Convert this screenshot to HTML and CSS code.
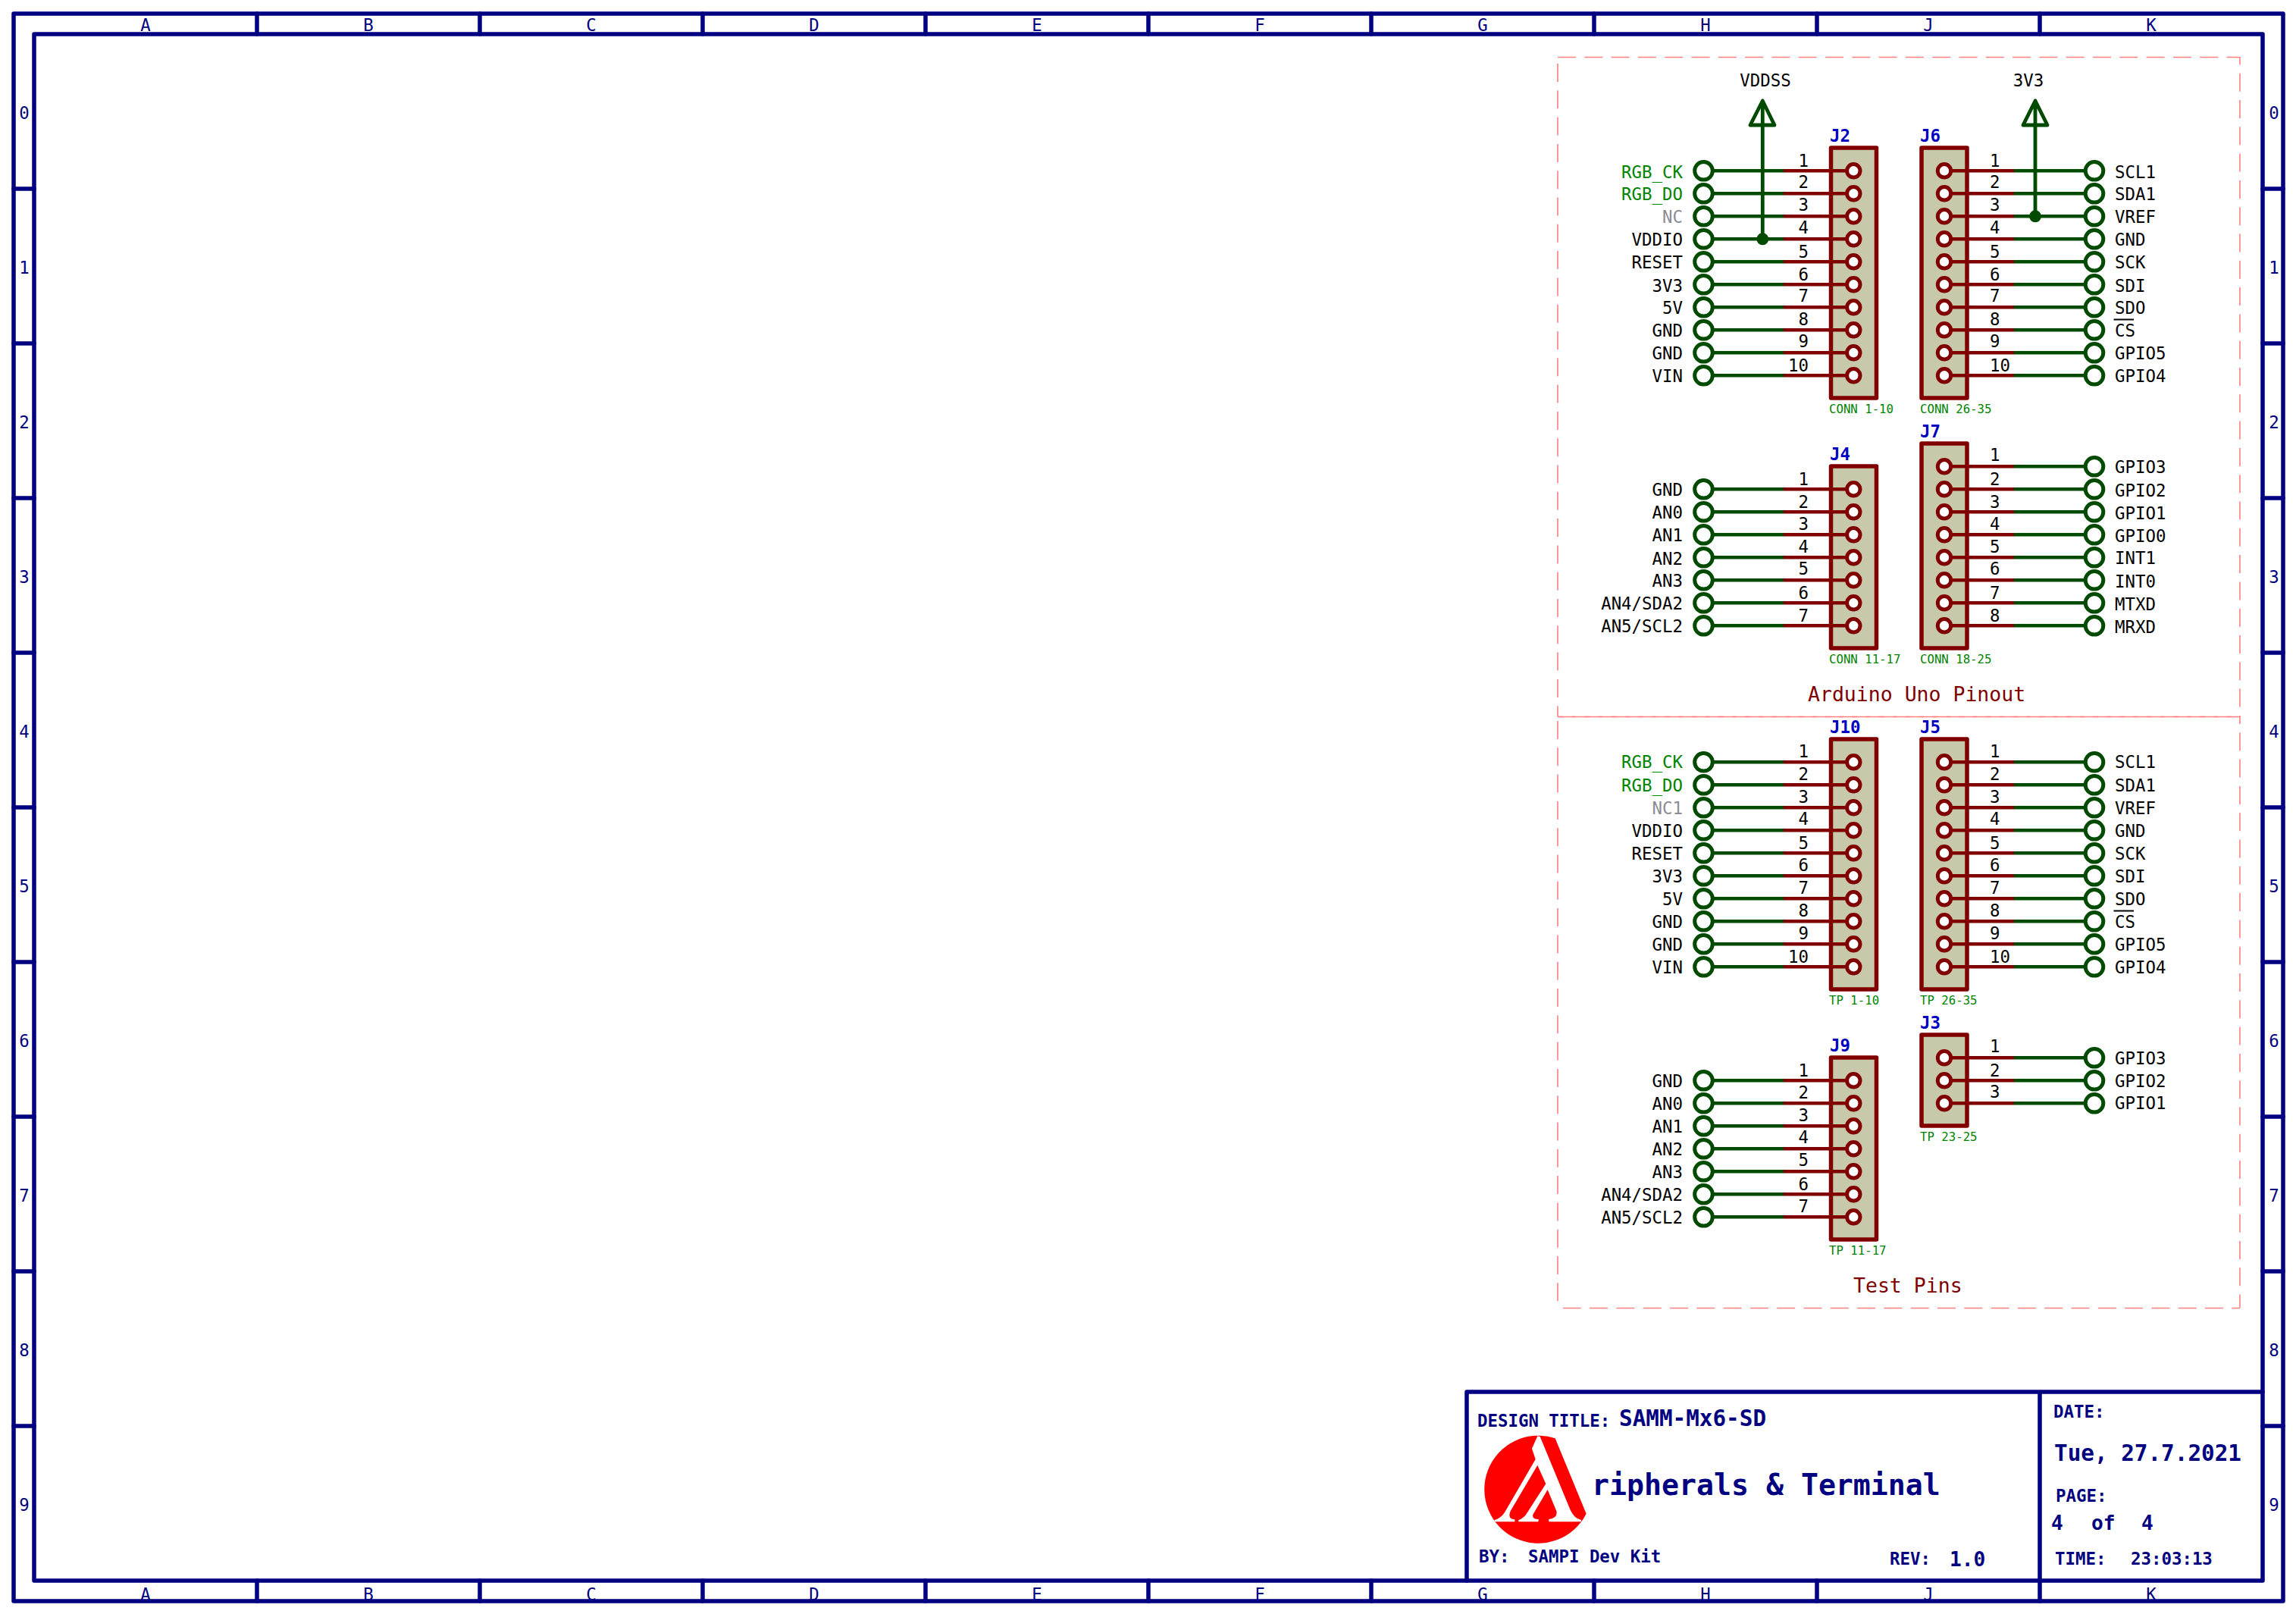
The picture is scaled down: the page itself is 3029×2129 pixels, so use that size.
FILE: index.html
```
<!DOCTYPE html>
<html lang="en">
<head>
<meta charset="utf-8">
<title>SAMM-Mx6-SD Peripherals &amp; Terminal</title>
<link rel="stylesheet" href="styles.css">
</head>
<body>
<svg class="sheet" width="3029" height="2129" viewBox="0 0 3029 2129" xmlns="http://www.w3.org/2000/svg">
<defs>
  <g id="pl">
    <line class="red" x1="2353" y1="0" x2="2445" y2="0"/>
    <line class="wire" x1="2259" y1="0" x2="2353" y2="0"/>
    <circle class="term" cx="2247.5" cy="0" r="11.8"/>
    <circle class="pad" cx="2445.3" cy="0" r="8.7"/>
  </g>
  <g id="pr">
    <line class="red" x1="2565" y1="0" x2="2657" y2="0"/>
    <line class="wire" x1="2657" y1="0" x2="2751" y2="0"/>
    <circle class="term" cx="2763" cy="0" r="11.8"/>
    <circle class="pad" cx="2565" cy="0" r="8.7"/>
  </g>
</defs>

<!-- frame -->
<g class="frame">
  <rect x="18" y="18" width="2994" height="2094"/>
  <rect x="45" y="45" width="2940" height="2040"/>
  <path d="M339 18V45M633 18V45M927 18V45M1221 18V45M1515 18V45M1809 18V45M2103 18V45M2397 18V45M2691 18V45"/>
  <path d="M339 2085V2112M633 2085V2112M927 2085V2112M1221 2085V2112M1515 2085V2112M1809 2085V2112M2103 2085V2112M2397 2085V2112"/>
  <path d="M18 249H45M18 453H45M18 657H45M18 861H45M18 1065H45M18 1269H45M18 1473H45M18 1677H45M18 1881H45"/>
  <path d="M2985 249H3012M2985 453H3012M2985 657H3012M2985 861H3012M2985 1065H3012M2985 1269H3012M2985 1473H3012M2985 1677H3012M2985 1881H3012"/>
  <path d="M1935 2085V1836H2985M2691 1836V2112"/>
</g>
<g class="zone mid">
  <text x="192" y="41">A</text><text x="486" y="41">B</text><text x="780" y="41">C</text><text x="1074" y="41">D</text><text x="1368" y="41">E</text><text x="1662" y="41">F</text><text x="1956" y="41">G</text><text x="2250" y="41">H</text><text x="2544" y="41">J</text><text x="2838" y="41">K</text>
  <text x="192" y="2111">A</text><text x="486" y="2111">B</text><text x="780" y="2111">C</text><text x="1074" y="2111">D</text><text x="1368" y="2111">E</text><text x="1662" y="2111">F</text><text x="1956" y="2111">G</text><text x="2250" y="2111">H</text><text x="2544" y="2111">J</text><text x="2838" y="2111">K</text>
  <text x="32" y="157">0</text><text x="32" y="361">1</text><text x="32" y="565">2</text><text x="32" y="769">3</text><text x="32" y="973">4</text><text x="32" y="1177">5</text><text x="32" y="1381">6</text><text x="32" y="1585">7</text><text x="32" y="1789">8</text><text x="32" y="1993">9</text>
  <text x="3000" y="157">0</text><text x="3000" y="361">1</text><text x="3000" y="565">2</text><text x="3000" y="769">3</text><text x="3000" y="973">4</text><text x="3000" y="1177">5</text><text x="3000" y="1381">6</text><text x="3000" y="1585">7</text><text x="3000" y="1789">8</text><text x="3000" y="1993">9</text>
</g>

<!-- dashed groups -->
<g class="dash">
  <line class="d0" x1="2055" y1="75.5" x2="2955" y2="75.5"/>
  <line class="d1" x1="2055" y1="75" x2="2055" y2="945"/>
  <line class="d2" x1="2955" y1="75" x2="2955" y2="945"/>
  <line class="d0" x1="2055" y1="945.5" x2="2955" y2="945.5"/>
  <line class="d3" x1="2055" y1="945.5" x2="2955" y2="945.5"/>
  <line class="d4" x1="2055" y1="945" x2="2055" y2="1725"/>
  <line class="d5" x1="2955" y1="945" x2="2955" y2="1725"/>
  <line class="d6" x1="2055" y1="1725.5" x2="2955" y2="1725.5"/>
</g>

<!-- connector boxes -->
<g class="box">
  <rect x="2415.5" y="195" width="60" height="330"/>
  <rect x="2535" y="195" width="60" height="330"/>
  <rect x="2415.5" y="615" width="60" height="240"/>
  <rect x="2535" y="585" width="60" height="270"/>
  <rect x="2415.5" y="975" width="60" height="330"/>
  <rect x="2535" y="975" width="60" height="330"/>
  <rect x="2415.5" y="1395" width="60" height="240"/>
  <rect x="2535" y="1365" width="60" height="120"/>
</g>

<!-- pins -->
<g>
  <use href="#pl" y="225.3"/><use href="#pl" y="255.3"/><use href="#pl" y="285.3"/><use href="#pl" y="315.3"/><use href="#pl" y="345.3"/><use href="#pl" y="375.3"/><use href="#pl" y="405.3"/><use href="#pl" y="435.3"/><use href="#pl" y="465.3"/><use href="#pl" y="495.3"/>
  <use href="#pr" y="225.3"/><use href="#pr" y="255.3"/><use href="#pr" y="285.3"/><use href="#pr" y="315.3"/><use href="#pr" y="345.3"/><use href="#pr" y="375.3"/><use href="#pr" y="405.3"/><use href="#pr" y="435.3"/><use href="#pr" y="465.3"/><use href="#pr" y="495.3"/>
  <use href="#pl" y="645.3"/><use href="#pl" y="675.3"/><use href="#pl" y="705.3"/><use href="#pl" y="735.3"/><use href="#pl" y="765.3"/><use href="#pl" y="795.3"/><use href="#pl" y="825.3"/>
  <use href="#pr" y="615.3"/><use href="#pr" y="645.3"/><use href="#pr" y="675.3"/><use href="#pr" y="705.3"/><use href="#pr" y="735.3"/><use href="#pr" y="765.3"/><use href="#pr" y="795.3"/><use href="#pr" y="825.3"/>
  <use href="#pl" y="1005.3"/><use href="#pl" y="1035.3"/><use href="#pl" y="1065.3"/><use href="#pl" y="1095.3"/><use href="#pl" y="1125.3"/><use href="#pl" y="1155.3"/><use href="#pl" y="1185.3"/><use href="#pl" y="1215.3"/><use href="#pl" y="1245.3"/><use href="#pl" y="1275.3"/>
  <use href="#pr" y="1005.3"/><use href="#pr" y="1035.3"/><use href="#pr" y="1065.3"/><use href="#pr" y="1095.3"/><use href="#pr" y="1125.3"/><use href="#pr" y="1155.3"/><use href="#pr" y="1185.3"/><use href="#pr" y="1215.3"/><use href="#pr" y="1245.3"/><use href="#pr" y="1275.3"/>
  <use href="#pl" y="1425.3"/><use href="#pl" y="1455.3"/><use href="#pl" y="1485.3"/><use href="#pl" y="1515.3"/><use href="#pl" y="1545.3"/><use href="#pl" y="1575.3"/><use href="#pl" y="1605.3"/>
  <use href="#pr" y="1395.3"/><use href="#pr" y="1425.3"/><use href="#pr" y="1455.3"/>
</g>

<!-- power symbols -->
<g class="pwr">
  <path d="M2325.3 315V133M2309 165H2341L2325.3 133Z"/>
  <path d="M2685 285V133M2669 165H2701L2685 133Z"/>
</g>
<circle class="dot" cx="2325.3" cy="315.3" r="8"/>
<circle class="dot" cx="2685" cy="285.3" r="8"/>
<g class="lab mid">
  <text x="2329" y="114">VDDSS</text>
  <text x="2676" y="114">3V3</text>
</g>

<!-- reference designators -->
<g class="ref">
  <text x="2414" y="187">J2</text><text x="2533" y="187">J6</text>
  <text x="2414" y="607">J4</text><text x="2533" y="577">J7</text>
  <text x="2414" y="967">J10</text><text x="2533" y="967">J5</text>
  <text x="2414" y="1387">J9</text><text x="2533" y="1357">J3</text>
</g>
<g class="val">
  <text x="2413" y="545">CONN 1-10</text><text x="2533" y="545">CONN 26-35</text>
  <text x="2413" y="875">CONN 11-17</text><text x="2533" y="875">CONN 18-25</text>
  <text x="2413" y="1325">TP 1-10</text><text x="2533" y="1325">TP 26-35</text>
  <text x="2413" y="1655">TP 11-17</text><text x="2533" y="1505">TP 23-25</text>
</g>

<!-- pin numbers, left connectors -->
<g class="lab end">
  <text x="2386" y="220">1</text><text x="2386" y="248">2</text><text x="2386" y="278">3</text><text x="2386" y="308">4</text><text x="2386" y="340">5</text><text x="2386" y="370">6</text><text x="2386" y="398">7</text><text x="2386" y="429">8</text><text x="2386" y="458">9</text><text x="2386" y="490">10</text>
  <text x="2386" y="640">1</text><text x="2386" y="670">2</text><text x="2386" y="699">3</text><text x="2386" y="729">4</text><text x="2386" y="758">5</text><text x="2386" y="790">6</text><text x="2386" y="820">7</text>
  <text x="2386" y="999">1</text><text x="2386" y="1029">2</text><text x="2386" y="1059">3</text><text x="2386" y="1088">4</text><text x="2386" y="1120">5</text><text x="2386" y="1149">6</text><text x="2386" y="1179">7</text><text x="2386" y="1209">8</text><text x="2386" y="1239">9</text><text x="2386" y="1270">10</text>
  <text x="2386" y="1420">1</text><text x="2386" y="1449">2</text><text x="2386" y="1479">3</text><text x="2386" y="1508">4</text><text x="2386" y="1538">5</text><text x="2386" y="1570">6</text><text x="2386" y="1599">7</text>
</g>
<!-- pin numbers, right connectors -->
<g class="lab">
  <text x="2625" y="220">1</text><text x="2625" y="248">2</text><text x="2625" y="278">3</text><text x="2625" y="308">4</text><text x="2625" y="340">5</text><text x="2625" y="370">6</text><text x="2625" y="398">7</text><text x="2625" y="429">8</text><text x="2625" y="458">9</text><text x="2625" y="490">10</text>
  <text x="2625" y="608">1</text><text x="2625" y="640">2</text><text x="2625" y="670">3</text><text x="2625" y="699">4</text><text x="2625" y="729">5</text><text x="2625" y="758">6</text><text x="2625" y="790">7</text><text x="2625" y="820">8</text>
  <text x="2625" y="999">1</text><text x="2625" y="1029">2</text><text x="2625" y="1059">3</text><text x="2625" y="1088">4</text><text x="2625" y="1120">5</text><text x="2625" y="1149">6</text><text x="2625" y="1179">7</text><text x="2625" y="1209">8</text><text x="2625" y="1239">9</text><text x="2625" y="1270">10</text>
  <text x="2625" y="1388">1</text><text x="2625" y="1420">2</text><text x="2625" y="1448">3</text>
</g>

<!-- net labels, left -->
<g class="lab end">
  <text class="lg" x="2220" y="235">RGB_CK</text><text class="lg" x="2220" y="264">RGB_DO</text><text class="nc" x="2220" y="294">NC</text><text x="2220" y="324">VDDIO</text><text x="2220" y="354">RESET</text><text x="2220" y="385">3V3</text><text x="2220" y="414">5V</text><text x="2220" y="444">GND</text><text x="2220" y="474">GND</text><text x="2220" y="504">VIN</text>
  <text x="2220" y="654">GND</text><text x="2220" y="684">AN0</text><text x="2220" y="714">AN1</text><text x="2220" y="745">AN2</text><text x="2220" y="774">AN3</text><text x="2220" y="804">AN4/SDA2</text><text x="2220" y="834">AN5/SCL2</text>
  <text class="lg" x="2220" y="1013">RGB_CK</text><text class="lg" x="2220" y="1044">RGB_DO</text><text class="nc" x="2220" y="1074">NC1</text><text x="2220" y="1104">VDDIO</text><text x="2220" y="1134">RESET</text><text x="2220" y="1164">3V3</text><text x="2220" y="1194">5V</text><text x="2220" y="1224">GND</text><text x="2220" y="1254">GND</text><text x="2220" y="1284">VIN</text>
  <text x="2220" y="1434">GND</text><text x="2220" y="1464">AN0</text><text x="2220" y="1494">AN1</text><text x="2220" y="1524">AN2</text><text x="2220" y="1554">AN3</text><text x="2220" y="1584">AN4/SDA2</text><text x="2220" y="1614">AN5/SCL2</text>
</g>
<!-- net labels, right -->
<g class="lab">
  <text x="2790" y="235">SCL1</text><text x="2790" y="264">SDA1</text><text x="2790" y="294">VREF</text><text x="2790" y="324">GND</text><text x="2790" y="354">SCK</text><text x="2790" y="385">SDI</text><text x="2790" y="414">SDO</text><text x="2790" y="444">CS</text><text x="2790" y="474">GPIO5</text><text x="2790" y="504">GPIO4</text>
  <text x="2790" y="624">GPIO3</text><text x="2790" y="655">GPIO2</text><text x="2790" y="685">GPIO1</text><text x="2790" y="715">GPIO0</text><text x="2790" y="744">INT1</text><text x="2790" y="775">INT0</text><text x="2790" y="805">MTXD</text><text x="2790" y="835">MRXD</text>
  <text x="2790" y="1013">SCL1</text><text x="2790" y="1044">SDA1</text><text x="2790" y="1074">VREF</text><text x="2790" y="1104">GND</text><text x="2790" y="1134">SCK</text><text x="2790" y="1164">SDI</text><text x="2790" y="1194">SDO</text><text x="2790" y="1224">CS</text><text x="2790" y="1254">GPIO5</text><text x="2790" y="1284">GPIO4</text>
  <text x="2790" y="1404">GPIO3</text><text x="2790" y="1434">GPIO2</text><text x="2790" y="1463">GPIO1</text>
</g>
<line class="bar" x1="2788.5" y1="421.5" x2="2815" y2="421.5"/>
<line class="bar" x1="2788.5" y1="1201.5" x2="2815" y2="1201.5"/>

<!-- sheet notes -->
<g class="note">
  <text x="2385" y="925">Arduino Uno Pinout</text>
  <text x="2445" y="1705">Test Pins</text>
</g>

<!-- title block -->
<g class="tb">
  <text class="t22" x="1949" y="1882">DESIGN TITLE:</text>
  <text class="t29" x="2136" y="1881">SAMM-Mx6-SD</text>
  <text class="t38" x="2100" y="1972">ripherals &amp; Terminal</text>
  <text class="t22" x="1951" y="2061">BY:</text>
  <text class="t22" x="2016" y="2061">SAMPI Dev Kit</text>
  <text class="t22" x="2493" y="2064">REV:</text>
  <text class="t26" x="2572" y="2066">1.0</text>
  <text class="t22" x="2709" y="1870">DATE:</text>
  <text class="t29" x="2710" y="1927">Tue, 27.7.2021</text>
  <text class="t22" x="2712" y="1981">PAGE:</text>
  <text class="t26" x="2706" y="2018">4</text>
  <text class="t26" x="2759" y="2018">of</text>
  <text class="t26" x="2825" y="2018">4</text>
  <text class="t22" x="2711" y="2064">TIME:</text>
  <text class="t22" x="2811" y="2064">23:03:13</text>
</g>

<!-- logo -->
<g transform="translate(1940 1880) scale(0.33333)">
  <path class="logo-red" d="M335 52A213 213 0 1 0 458 350Z"/>
  <path class="logo-white" d="M265 43 L275 45 L395 335 Q410 368 438 375 L438 382 L310 382 L310 372 Q346 368 340 340 L305 255 L248 352 Q240 372 270 373 L268 382 L190 382 L190 375 Q212 368 225 345 L298 232 L265 158 L158 340 Q145 372 175 373 L175 382 L95 382 L95 375 Q120 368 135 345 L257 135 L243 92 Z"/>
</g>
</svg>
</body>
</html>
```
FILE: styles.css
```
html, body {
  margin: 0;
  padding: 0;
  background: #ffffff;
}
.sheet {
  display: block;
  font-family: "DejaVu Sans Mono", "Liberation Mono", monospace;
}
.frame rect, .frame path {
  fill: none;
  stroke: #000080;
  stroke-width: 5.5;
  stroke-linejoin: round;
  stroke-linecap: round;
}
.zone text {
  font-size: 22.4px;
  fill: #000080;
}
.mid { text-anchor: middle; }
.end { text-anchor: end; }
.dash line {
  stroke: #ff8080;
  stroke-width: 1.6;
  stroke-dasharray: 24 11.3;
}
.dash .d0 { stroke-dashoffset: 0; }
.dash .d1 { stroke-dashoffset: 26.3; }
.dash .d2 { stroke-dashoffset: 13.6; }
.dash .d3 { stroke-dashoffset: 17; }
.dash .d4 { stroke-dashoffset: 29.3; }
.dash .d5 { stroke-dashoffset: 14; }
.dash .d6 { stroke-dashoffset: 28.5; }
.box rect {
  fill: #c8c8aa;
  stroke: #800000;
  stroke-width: 5.5;
  stroke-linejoin: round;
}
.red {
  stroke: #800000;
  stroke-width: 4.6;
}
.wire {
  stroke: #004b00;
  stroke-width: 4.6;
}
.term {
  fill: #ffffff;
  stroke: #004b00;
  stroke-width: 5;
}
.pad {
  fill: #ffffff;
  stroke: #800000;
  stroke-width: 5;
}
.pwr path {
  fill: none;
  stroke: #004b00;
  stroke-width: 4.8;
  stroke-linejoin: round;
  stroke-linecap: round;
}
.dot { fill: #004b00; }
.lab text {
  font-size: 22.4px;
  fill: #000000;
}
.lab .lg { fill: #008400; }
.lab .nc { fill: #8c8c96; }
.bar {
  stroke: #000000;
  stroke-width: 2;
}
.ref text {
  font-size: 22.4px;
  font-weight: bold;
  fill: #0000c2;
}
.val text {
  font-size: 15.7px;
  fill: #008400;
}
.note text {
  font-size: 26.5px;
  fill: #800000;
}
.tb text {
  font-weight: bold;
  fill: #000080;
}
.tb .t22 { font-size: 22.4px; }
.tb .t26 { font-size: 26.2px; }
.tb .t29 { font-size: 29.3px; }
.tb .t38 { font-size: 38.2px; }
.logo-red { fill: #ff0000; }
.logo-white { fill: #ffffff; }
```
